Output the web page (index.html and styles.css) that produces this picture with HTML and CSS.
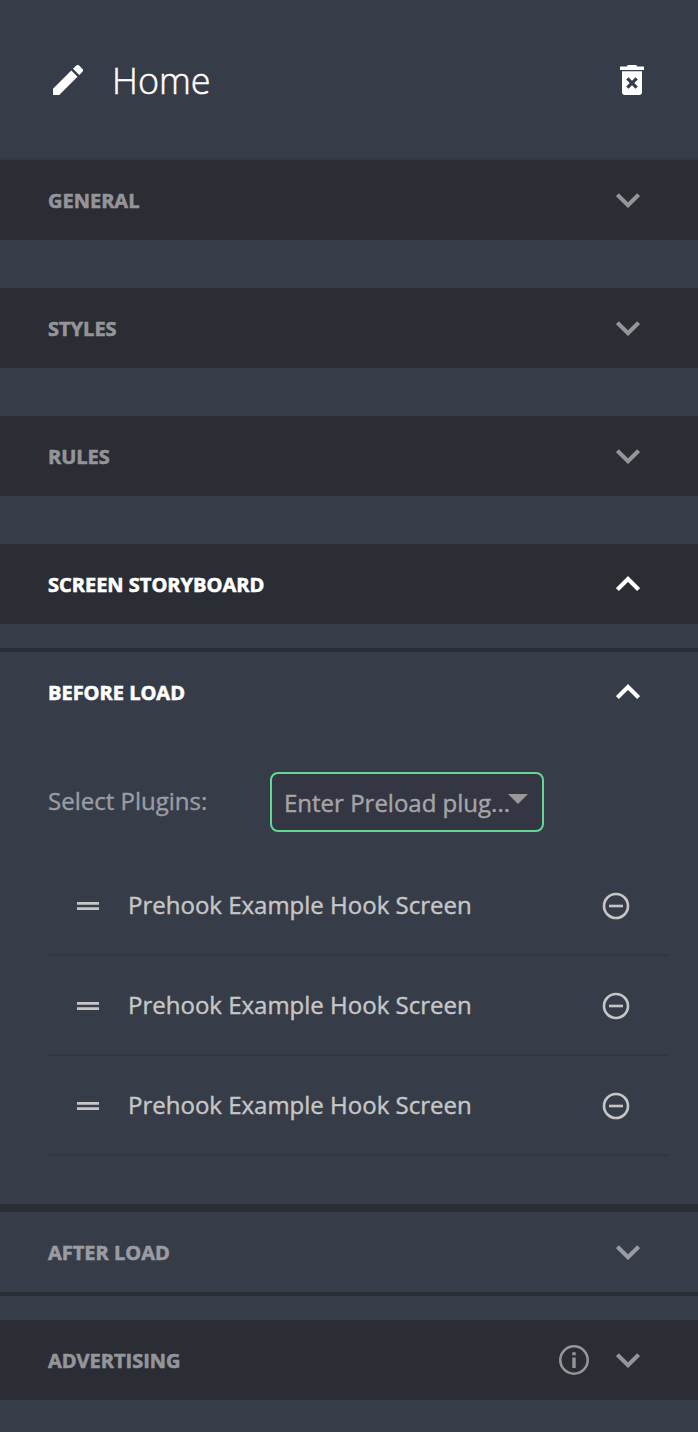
FILE: index.html
```html
<!DOCTYPE html>
<html lang="en">
<head>
<meta charset="utf-8">
<title>Home</title>
<link rel="stylesheet" href="styles.css">
</head>
<body>
<svg class="defs" aria-hidden="true">
  <symbol id="down" viewBox="0 0 24 16"><path d="M1.4 2.7 12 13.2 22.6 2.7" fill="none" stroke="currentColor" stroke-width="4.1"/></symbol>
  <symbol id="up" viewBox="0 0 24 16"><path d="M1.4 13.6 12 3 22.6 13.6" fill="none" stroke="currentColor" stroke-width="4.1"/></symbol>
  <symbol id="minus" viewBox="0 0 28 28"><circle cx="14" cy="14" r="12" fill="none" stroke="currentColor" stroke-width="2.6"/><path d="M7 12.7h14v2.6H7z" fill="currentColor"/></symbol>
  <symbol id="grip" viewBox="0 0 22 8"><path d="M0 0h22v2.7H0zM0 5.3h22V8H0z" fill="currentColor"/></symbol>
</svg>
<main class="panel">
  <header class="header">
    <svg class="pencil" viewBox="0 0 30 30"><path d="M0 23.8 18.3 5.5l6.2 6.2L6.2 30H0zM20 3.8 23.1.7q1.6-1.5 3.2 0l3 3q1.5 1.6 0 3.2L26.2 10z"/></svg>
    <h1 class="title">Home</h1>
    <svg class="trash" viewBox="0 0 24 30"><path d="M0 1.5h6.5L8 0h8l1.5 1.5H24V5H0z"/><path fill-rule="evenodd" d="M2 6.3h20V27q0 3-3 3H5q-3 0-3-3zM8.5 12.2 6.2 14.5 9.7 18l-3.5 3.5 2.3 2.3 3.5-3.5 3.5 3.5 2.3-2.3-3.5-3.5 3.5-3.5-2.3-2.3-3.5 3.5z"/></svg>
  </header>
  <section class="bar spaced"><h2 class="heading">General</h2><svg class="chevron"><use href="#down"/></svg></section>
  <section class="bar spaced"><h2 class="heading">Styles</h2><svg class="chevron"><use href="#down"/></svg></section>
  <section class="bar spaced"><h2 class="heading">Rules</h2><svg class="chevron"><use href="#down"/></svg></section>
  <section class="bar active storyboard"><h2 class="heading">Screen Storyboard</h2><svg class="chevron"><use href="#up"/></svg></section>
  <section class="hooks">
    <div class="subbar active"><h2 class="heading">Before Load</h2><svg class="chevron"><use href="#up"/></svg></div>
    <div class="field">
      <span class="label">Select Plugins:</span>
      <div class="select"><span class="value">Enter Preload plug...</span><svg class="caret" viewBox="0 0 20 10"><path d="M0 0h20L10 10z"/></svg></div>
    </div>
    <ul class="list">
      <li class="item"><svg class="grip"><use href="#grip"/></svg><span class="name">Prehook Example Hook Screen</span><svg class="remove"><use href="#minus"/></svg></li>
      <li class="item"><svg class="grip"><use href="#grip"/></svg><span class="name">Prehook Example Hook Screen</span><svg class="remove"><use href="#minus"/></svg></li>
      <li class="item"><svg class="grip"><use href="#grip"/></svg><span class="name">Prehook Example Hook Screen</span><svg class="remove"><use href="#minus"/></svg></li>
    </ul>
  </section>
  <section class="after subbar"><h2 class="heading">After Load</h2><svg class="chevron"><use href="#down"/></svg></section>
  <section class="bar"><h2 class="heading">Advertising</h2><svg class="info" viewBox="0 0 30 30"><circle cx="15" cy="15" r="13.7" fill="none" stroke="currentColor" stroke-width="2.6"/><path d="M13.3 7.2h3.4v3.1h-3.4zM13.3 12.5h3.4V23h-3.4z" fill="currentColor"/></svg><svg class="chevron"><use href="#down"/></svg></section>
</main>
</body>
</html>
```

FILE: styles.css
```css
* { box-sizing: border-box; }
body { margin: 0; background: #373d48; font-family: "Open Sans", sans-serif; }
svg { display: block; flex: none; }
.defs { position: absolute; width: 0; height: 0; }
.panel { height: 1432px; overflow: hidden; color: #949599; }
.header { height: 160px; padding: 2px 54px 0 53px; display: flex; align-items: center; color: #fff; border-bottom: 2px solid #353844; }
.pencil { width: 30px; height: 30px; fill: #fff; }
.title { flex: 1; margin: 2px 0 0 29px; font-size: 36px; font-weight: 300; line-height: 50px; -webkit-text-stroke: 0.5px; }
.trash { width: 24px; height: 30px; fill: #fff; }
.bar, .subbar { height: 80px; padding: 0 58px 0 48px; display: flex; align-items: center; }
.bar { background: #2b2d35; }
.spaced { margin-bottom: 48px; }
.storyboard { margin-bottom: 24px; }
.heading { flex: 1; margin: 2px 0 0; font-size: 20px; font-weight: 700; line-height: 28px; text-transform: uppercase; -webkit-text-stroke: 0.6px; }
.active { color: #fff; }
.chevron { width: 24px; height: 16px; }
.hooks { height: 564px; border-top: 4px solid #2b2d35; border-bottom: 8px solid #2b2d35; }
.field { height: 60px; margin-top: 40px; padding-left: 48px; display: flex; align-items: center; font-size: 24px; color: #9a9ca3; -webkit-text-stroke: 0.4px; }
.label { width: 222px; margin-bottom: 2px; line-height: 34px; }
.select { width: 274px; height: 60px; padding: 0 14px 0 12px; display: flex; align-items: center; justify-content: space-between; border: 2px solid #65d596; border-radius: 8px; background: #343743; color: #a5a5a7; white-space: nowrap; }
.caret { width: 20px; height: 10px; margin: -6px 0 0 -4px; fill: #999; }
.list { margin: 24px 30px 0 48px; padding: 0; list-style: none; color: #c6c6c7; }
.item { height: 100px; padding: 0 38px 0 29px; display: flex; align-items: center; font-size: 24px; border-bottom: 2px solid #343742; }
.grip { width: 22px; height: 8px; margin-top: 2px; }
.name { flex: 1; margin-left: 29px; line-height: 34px; -webkit-text-stroke: 0.4px; }
.remove { width: 28px; height: 28px; margin-top: 2px; }
.after { height: 84px; border-bottom: 4px solid #2b2d35; margin-bottom: 24px; color: #9a9ca3; }
.info { width: 30px; height: 30px; margin-right: 27px; }
```
